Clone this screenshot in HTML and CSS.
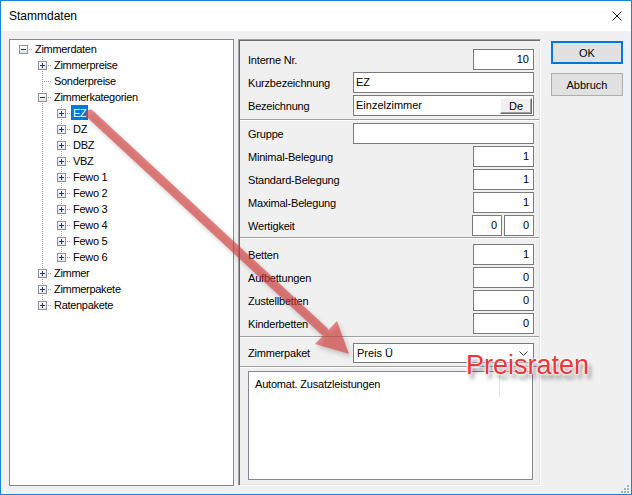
FILE: index.html
```html
<!DOCTYPE html>
<html>
<head>
<meta charset="utf-8">
<link rel="stylesheet" href="styles.css">
</head>
<body>
<div class="window">
  <div class="titlebar">
    <span class="title">Stammdaten</span>
    <svg class="close" width="10" height="10" viewBox="0 0 10 10"><path d="M0.5 0.5L9.5 9.5M9.5 0.5L0.5 9.5" stroke="#111" stroke-width="1" fill="none"/></svg>
  </div>
  <div class="content">
    <div class="tree">
      <div class="tr"><span class="c h"><i class="box minus"></i></span><span class="t">Zimmerdaten</span></div>
      <div class="tr"><span class="c"></span><span class="c v h"><i class="box plus"></i></span><span class="t">Zimmerpreise</span></div>
      <div class="tr"><span class="c"></span><span class="c v h leaf"></span><span class="t">Sonderpreise</span></div>
      <div class="tr"><span class="c"></span><span class="c v h"><i class="box minus"></i></span><span class="t">Zimmerkategorien</span></div>
      <div class="tr"><span class="c"></span><span class="c v"></span><span class="c v h"><i class="box plus"></i></span><span class="t sel">EZ</span></div>
      <div class="tr"><span class="c"></span><span class="c v"></span><span class="c v h"><i class="box plus"></i></span><span class="t">DZ</span></div>
      <div class="tr"><span class="c"></span><span class="c v"></span><span class="c v h"><i class="box plus"></i></span><span class="t">DBZ</span></div>
      <div class="tr"><span class="c"></span><span class="c v"></span><span class="c v h"><i class="box plus"></i></span><span class="t">VBZ</span></div>
      <div class="tr"><span class="c"></span><span class="c v"></span><span class="c v h"><i class="box plus"></i></span><span class="t">Fewo 1</span></div>
      <div class="tr"><span class="c"></span><span class="c v"></span><span class="c v h"><i class="box plus"></i></span><span class="t">Fewo 2</span></div>
      <div class="tr"><span class="c"></span><span class="c v"></span><span class="c v h"><i class="box plus"></i></span><span class="t">Fewo 3</span></div>
      <div class="tr"><span class="c"></span><span class="c v"></span><span class="c v h"><i class="box plus"></i></span><span class="t">Fewo 4</span></div>
      <div class="tr"><span class="c"></span><span class="c v"></span><span class="c v h"><i class="box plus"></i></span><span class="t">Fewo 5</span></div>
      <div class="tr"><span class="c"></span><span class="c v"></span><span class="c vt h"><i class="box plus"></i></span><span class="t">Fewo 6</span></div>
      <div class="tr"><span class="c"></span><span class="c v h"><i class="box plus"></i></span><span class="t">Zimmer</span></div>
      <div class="tr"><span class="c"></span><span class="c v h"><i class="box plus"></i></span><span class="t">Zimmerpakete</span></div>
      <div class="tr"><span class="c"></span><span class="c vt h"><i class="box plus"></i></span><span class="t">Ratenpakete</span></div>
    </div>

    <div class="panel">
      <div class="sec s1">
        <div class="row"><span class="lbl">Interne Nr.</span><div class="inp short num">10</div></div>
        <div class="row"><span class="lbl">Kurzbezeichnung</span><div class="inp long">EZ</div></div>
        <div class="row"><span class="lbl">Bezeichnung</span><div class="inp long bez"><span class="val">Einzelzimmer</span><span class="de">De</span></div></div>
      </div>
      <div class="sep"></div>
      <div class="sec s2">
        <div class="row"><span class="lbl">Gruppe</span><div class="inp long"></div></div>
        <div class="row"><span class="lbl">Minimal-Belegung</span><div class="inp short num">1</div></div>
        <div class="row"><span class="lbl">Standard-Belegung</span><div class="inp short num">1</div></div>
        <div class="row"><span class="lbl">Maximal-Belegung</span><div class="inp short num">1</div></div>
        <div class="row"><span class="lbl">Wertigkeit</span><div class="pair"><div class="inp tiny num">0</div><div class="inp tiny num">0</div></div></div>
      </div>
      <div class="sep"></div>
      <div class="sec s3">
        <div class="row"><span class="lbl">Betten</span><div class="inp short num">1</div></div>
        <div class="row"><span class="lbl">Aufbettungen</span><div class="inp short num">0</div></div>
        <div class="row"><span class="lbl">Zustellbetten</span><div class="inp short num">0</div></div>
        <div class="row"><span class="lbl">Kinderbetten</span><div class="inp short num">0</div></div>
      </div>
      <div class="sep"></div>
      <div class="sec s4">
        <div class="row combo-row"><span class="lbl">Zimmerpaket</span><div class="inp long combo"><span class="val">Preis Ü</span><svg class="chev" width="9" height="5" viewBox="0 0 9 5"><polyline points="0.5,0.5 4.5,4.5 8.5,0.5" fill="none" stroke="#3c3c3c" stroke-width="1"/></svg></div></div>
      </div>
      <div class="sep"></div>
      <div class="sec s5">
        <div class="list">
          <div class="lhead"><span class="col1">Automat. Zusatzleistungen</span><span class="col2"></span></div>
        </div>
      </div>
    </div>

    <div class="btns">
      <div class="btn def">OK</div>
      <div class="btn">Abbruch</div>
    </div>
  </div>

  <svg class="arrow" width="632" height="495" viewBox="0 0 632 495">
    <g class="arr">
      <line x1="90" y1="114" x2="324" y2="331" stroke="#dc3c3c" stroke-width="9" stroke-linecap="round"/>
      <polygon points="349,354 315,344 337,321" fill="#dc3c3c"/>
    </g>
  </svg>
  <div class="callout">Preisraten</div>
  <svg class="grip" width="9" height="9" viewBox="0 0 9 9">
    <rect x="7" y="1" width="2" height="2" fill="#b0b0b0"/>
    <rect x="4" y="4" width="2" height="2" fill="#b0b0b0"/>
    <rect x="7" y="4" width="2" height="2" fill="#b0b0b0"/>
    <rect x="1" y="7" width="2" height="2" fill="#b0b0b0"/>
    <rect x="4" y="7" width="2" height="2" fill="#b0b0b0"/>
    <rect x="7" y="7" width="2" height="2" fill="#b0b0b0"/>
  </svg>
</div>
</body>
</html>
```

FILE: styles.css
```css
* { box-sizing: border-box; }
html, body { margin: 0; padding: 0; }
body {
  font-family: "Liberation Sans", Arial, sans-serif;
  font-size: 11px;
  color: #000;
  background: #fff;
}
.window {
  position: relative;
  width: 632px;
  height: 495px;
  border: 1px solid #1883d7;
  display: flex;
  flex-direction: column;
  background: #f0f0f0;
  overflow: hidden;
}
.titlebar {
  height: 30px;
  flex: none;
  background: #fff;
  display: flex;
  align-items: center;
  padding-left: 8px;
}
.title { font-size: 12px; color: #000; }
.close { margin-left: auto; margin-right: 9px; }

.content {
  flex: 1;
  display: flex;
  padding: 8px 0 0 8px;
}

/* tree */
.tree {
  width: 225px;
  height: 447px;
  border: 1px solid #828790;
  background: #fff;
  padding: 1px 0 0 4px;
  letter-spacing: -0.3px;
}
.tr { display: flex; height: 16px; }
.c { position: relative; width: 19px; height: 16px; flex: none; }
.c.v::before, .c.vt::before {
  content: "";
  position: absolute;
  left: 9px; top: 0;
  width: 1px; height: 16px;
  background: repeating-linear-gradient(to bottom, #a0a0a0 0 1px, transparent 1px 2px);
}
.c.vt::before { height: 9px; }
.c.h::after {
  content: "";
  position: absolute;
  left: 10px; top: 8px;
  width: 9px; height: 1px;
  background: repeating-linear-gradient(to right, transparent 0 1px, #a0a0a0 1px 2px);
}
.box {
  position: absolute;
  z-index: 1;
  left: 5px; top: 4px;
  width: 9px; height: 9px;
  border: 1px solid #919191;
  background: linear-gradient(#ffffff, #e3e3e3);
}
.box::before {
  content: "";
  position: absolute;
  left: 1px; top: 3px;
  width: 5px; height: 1px;
  background: #1c3a6e;
}
.box.plus::after {
  content: "";
  position: absolute;
  left: 3px; top: 1px;
  width: 1px; height: 5px;
  background: #1c3a6e;
}
.t {
  height: 16px;
  line-height: 16px;
  padding: 0 2px;
  white-space: nowrap;
}
.t.sel { background: #0078d7; color: #fff; height: 15px; line-height: 16px; }

/* panel */
.panel {
  width: 303px;
  height: 447px;
  margin-left: 4px;
  border: 1px solid;
  border-color: #a0a0a0 #ffffff #ffffff #a0a0a0;
  box-shadow: inset 1px 1px 0 #696969, inset -1px -1px 0 #e3e3e3;
  display: flex;
  flex-direction: column;
  letter-spacing: -0.2px;
}
.sec {
  padding: 0 6px 0 8px;
  display: flex;
  flex-direction: column;
  gap: 2px;
}
.s1 { padding-top: 9px; padding-bottom: 3px; }
.s2 { padding-top: 2px; padding-bottom: 1px; }
.s3 { padding-top: 5px; padding-bottom: 2px; }
.s4 { padding-top: 5px; padding-bottom: 3px; }
.s5 { padding-top: 3px; flex: 1; }
.sep {
  height: 2px;
  flex: none;
  border-top: 1px solid #a0a0a0;
  border-bottom: 1px solid #ffffff;
  margin: 0 1px;
}
.row { display: flex; align-items: center; height: 21px; }
.combo-row { height: 20px; }
.lbl { flex: 1; padding-left: 1px; white-space: nowrap; }
.inp {
  height: 21px;
  border: 1px solid #7a7a7a;
  background: #fff;
  line-height: 19px;
  padding: 0 2px;
  white-space: nowrap;
  letter-spacing: 0;
}
.long { width: 181px; }
.short { width: 61px; }
.tiny { width: 30px; }
.num { text-align: right; padding-right: 4px; }
.pair { display: flex; gap: 2px; }
.bez { display: flex; align-items: center; padding-right: 1px; }
.bez .val { flex: 1; }
.de {
  width: 32px;
  height: 16px;
  background: #f0f0f0;
  border: 1px solid;
  border-color: #ffffff #696969 #696969 #ffffff;
  box-shadow: inset -1px -1px 0 #a0a0a0;
  line-height: 14px;
  text-align: center;
}
.combo {
  height: 20px;
  line-height: 18px;
  display: flex;
  align-items: center;
  padding-left: 3px;
}
.combo .val { flex: 1; }
.chev { margin-right: 3px; }

.list {
  margin: 0 1px;
  height: 109px;
  border: 1px solid #828790;
  background: #fff;
}
.lhead { display: flex; height: 25px; line-height: 25px; }
.col1 { width: 251px; padding-left: 6px; border-right: 1px solid #e5e5e5; }

/* buttons */
.btns {
  width: 72px;
  margin-left: 10px;
  padding-top: 2px;
  display: flex;
  flex-direction: column;
  gap: 9px;
}
.btn {
  height: 23px;
  background: #e1e1e1;
  border: 1px solid #adadad;
  display: flex;
  align-items: center;
  justify-content: center;
}
.btn.def { border: 2px solid #0078d7; }

/* overlays */
.arrow {
  position: absolute;
  left: -1px;
  top: -1px;
  pointer-events: none;
  filter: drop-shadow(2px 3px 2px rgba(0, 0, 0, 0.3));
}
.arr { opacity: 0.62; }
.callout {
  position: absolute;
  left: 465px;
  top: 351px;
  font-family: "Liberation Sans", Arial, sans-serif;
  font-size: 27px;
  line-height: 27px;
  color: #f0343a;
  text-shadow: 0 0 1px #fff, 0 0 2px #fff, 0 0 3px #fff, 0 0 3px #fff, 3px 5px 4px rgba(0, 0, 0, 0.45);
}
.grip {
  position: absolute;
  right: 2px;
  bottom: 1px;
}
```
